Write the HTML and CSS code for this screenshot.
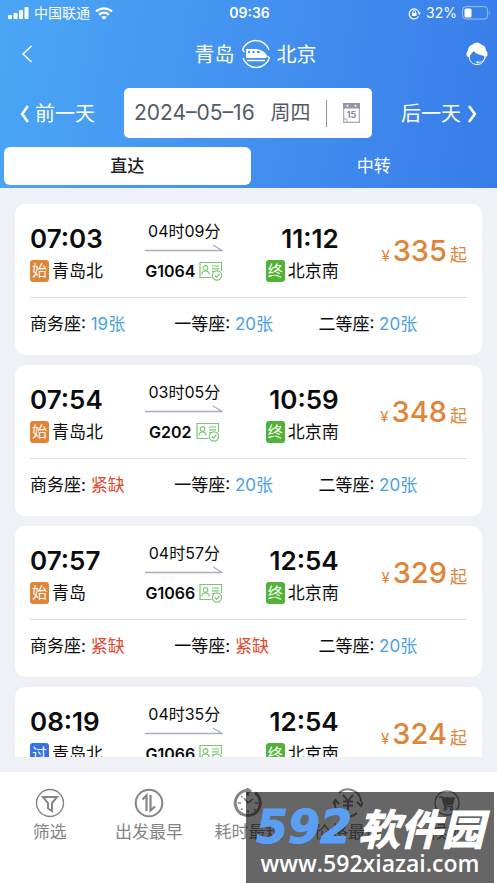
FILE: index.html
```html
<!DOCTYPE html>
<html lang="zh-CN">
<head>
<meta charset="utf-8">
<meta name="viewport" content="width=device-width, initial-scale=1">
<title>青岛 - 北京</title>
<link rel="stylesheet" href="styles.css">
</head>
<body>
<svg class="defs" aria-hidden="true">
  <symbol id="arrow" viewBox="0 0 78 8"><path d="M0 6.500H77L68 1" fill="none" stroke="#a9b0c3" stroke-width="1.300"/></symbol>
  <symbol id="idcard" viewBox="0 0 24 20" fill="none" stroke="#7cc576" stroke-width="1.200">
    <path d="M12.500 16.500H1V1.500H22.500V10"/><circle cx="6.500" cy="7" r="2.300"/><path d="M2.800 13.500C3 8.800 10 8.800 10.200 13.500M13 5H20M13 7.800H20M13 10.500H15"/>
    <circle cx="18" cy="14.500" r="4.600"/><path d="M15.800 14.500L17.500 16.200L20.500 12.800"/>
  </symbol>
</svg>

<header class="header">
  <div class="status">
    <div class="status-left">
      <svg width="21" height="12" viewBox="0 0 21 12" fill="#fff"><rect x="0" y="8" width="4" height="4" rx="1"/><rect x="5.500" y="6" width="4" height="6" rx="1"/><rect x="11" y="3" width="4" height="9" rx="1"/><rect x="16.500" y="0" width="4" height="12" rx="1"/></svg>
      <span>中国联通</span>
      <svg class="wifi" width="18" height="13" viewBox="0 0 18 13" fill="none" stroke="#fff" stroke-width="2.300"><path d="M1 4.500C5.500 0.200 12.500 0.200 17 4.500M4 7.800C7 5 11 5 14 7.800"/><path d="M6.200 10C7.800 8.500 10.200 8.500 11.800 10L9 12.800Z" fill="#fff" stroke="none"/></svg>
    </div>
    <strong class="clock">09:36</strong>
    <div class="status-right">
      <svg width="13" height="13" viewBox="0 0 13 13" fill="none" stroke="#fff" stroke-width="1.200"><path d="M10.500 9.500A5 5 0 1 1 11 5.500"/><path d="M9.500 5.500H13L11.500 8Z" fill="#fff" stroke="none"/><rect x="4" y="6" width="4.500" height="3" fill="#fff" stroke="none"/><path d="M4.900 6V4.800A1.300 1.300 0 0 1 7.600 4.800V6" stroke-width="1"/></svg>
      <span>32%</span>
      <svg width="29" height="14" viewBox="0 0 29 14"><rect x=".6" y=".6" width="25" height="12.500" rx="3.500" fill="none" stroke="#fff" stroke-opacity=".5"/><rect x="2.500" y="2.500" width="7" height="9" rx="1.500" fill="#fff"/><path d="M27.500 4.500Q29 7 27.500 9.500Z" fill="#fff" fill-opacity=".5"/></svg>
    </div>
  </div>

  <div class="title-row">
    <button class="icon-btn" aria-label="返回"><svg width="12" height="18" viewBox="0 0 12 18" fill="none" stroke="#fff" stroke-width="1.500"><path d="M10.500 1L2 9L10.500 17"/></svg></button>
    <h1 class="route"><span>青岛</span>
      <svg width="30" height="30" viewBox="0 0 30 30" fill="none" stroke="#fff" stroke-width="1.400">
        <path d="M1.500 11A14 14 0 0 1 28 11M28.500 19A14 14 0 0 1 2 19M1.500 11L3.500 13M28.500 19L26.500 17"/>
        <path d="M5 10H15C20 10 24.500 14 26 16.500C26 18.500 25 19 24 19H5Z" fill="#fff" stroke="none"/><path d="M6 21.500H24"/><path d="M7 12H9V14H7ZM11.500 12H13.500V14H11.500ZM16 12H18L19.500 14H16Z" fill="#4594f1" stroke="none"/>
      </svg>
      <span>北京</span></h1>
    <button class="icon-btn" aria-label="客服"><svg width="22" height="24" viewBox="0 0 22 24" fill="none" stroke="#fff"><path d="M3 14C3.500 19 6 22.500 11 22.500S18.500 19 19 14" stroke-width="1"/><path d="M2 15C0 14 0 10 2 8.500C2 5 5 2.500 7 2.500C8 .2 14 .2 15 2.500C18 3 20 5 20 8.500C22 10 22 14 20 15L18.500 14C13 13 9 11 7.500 9C6.500 11 4.500 12 3.500 15Z" fill="#fff" stroke="none"/><path d="M19 15C19 19 15 20.500 12 20.300"/><circle cx="11.500" cy="20.300" r=".8" fill="#fff"/></svg></button>
  </div>

  <div class="date-row">
    <button class="day-btn"><svg width="9" height="18" viewBox="0 0 9 18" fill="none" stroke="#fff" stroke-width="2.600"><path d="M7.800 1L2.200 9L7.800 17"/></svg>前一天</button>
    <button class="date-box"><span class="date">2024–05–16</span><span>周四</span><i class="divider"></i>
      <svg width="17" height="22" viewBox="0 0 17 22"><path d="M.7 2V20.300H16.300V2" fill="#fff" stroke="#a5a8b5" stroke-width="1.200"/><path d="M0 1H17V6.500H0Z" fill="#9396a5"/><circle cx="4.500" cy="3.800" r="1" fill="#fff"/><circle cx="12.500" cy="3.800" r="1" fill="#fff"/><path d="M1 17H4V20" fill="none" stroke="#a5a8b5"/><text x="8.500" y="16" class="cal-num">15</text></svg>
    </button>
    <button class="day-btn">后一天<svg width="10" height="18" viewBox="0 0 10 18" fill="none" stroke="#fff" stroke-width="2.600"><path d="M2 1L7.800 9L2 17"/></svg></button>
  </div>

  <nav class="tabs"><button class="tab active">直达</button><button class="tab">中转</button></nav>
</header>

<main class="results">
  <div class="list">
    <article class="card">
      <div class="trip">
        <div class="stop"><b class="time">07:03</b><span class="station"><i class="tag start">始</i>青岛北</span></div>
        <div class="train"><span>04时09分</span><svg class="arrow"><use href="#arrow"/></svg><span class="number"><b>G1064</b><svg class="idcard"><use href="#idcard"/></svg></span></div>
        <div class="stop end-stop"><b class="time">11:12</b><span class="station"><i class="tag end">终</i>北京南</span></div>
        <div class="price"><small>¥</small><b>335</b><span>起</span></div>
      </div>
      <div class="seats"><span>商务座: <em>19张</em></span><span>一等座: <em>20张</em></span><span>二等座: <em>20张</em></span></div>
    </article>
    <article class="card">
      <div class="trip">
        <div class="stop"><b class="time">07:54</b><span class="station"><i class="tag start">始</i>青岛北</span></div>
        <div class="train"><span>03时05分</span><svg class="arrow"><use href="#arrow"/></svg><span class="number"><b>G202</b><svg class="idcard"><use href="#idcard"/></svg></span></div>
        <div class="stop end-stop"><b class="time">10:59</b><span class="station"><i class="tag end">终</i>北京南</span></div>
        <div class="price"><small>¥</small><b>348</b><span>起</span></div>
      </div>
      <div class="seats"><span>商务座: <em class="scarce">紧缺</em></span><span>一等座: <em>20张</em></span><span>二等座: <em>20张</em></span></div>
    </article>
    <article class="card">
      <div class="trip">
        <div class="stop"><b class="time">07:57</b><span class="station"><i class="tag start">始</i>青岛</span></div>
        <div class="train"><span>04时57分</span><svg class="arrow"><use href="#arrow"/></svg><span class="number"><b>G1066</b><svg class="idcard"><use href="#idcard"/></svg></span></div>
        <div class="stop end-stop"><b class="time">12:54</b><span class="station"><i class="tag end">终</i>北京南</span></div>
        <div class="price"><small>¥</small><b>329</b><span>起</span></div>
      </div>
      <div class="seats"><span>商务座: <em class="scarce">紧缺</em></span><span>一等座: <em class="scarce">紧缺</em></span><span>二等座: <em>20张</em></span></div>
    </article>
    <article class="card">
      <div class="trip">
        <div class="stop"><b class="time">08:19</b><span class="station"><i class="tag pass">过</i>青岛北</span></div>
        <div class="train"><span>04时35分</span><svg class="arrow"><use href="#arrow"/></svg><span class="number"><b>G1066</b><svg class="idcard"><use href="#idcard"/></svg></span></div>
        <div class="stop end-stop"><b class="time">12:54</b><span class="station"><i class="tag end">终</i>北京南</span></div>
        <div class="price"><small>¥</small><b>324</b><span>起</span></div>
      </div>
    </article>
  </div>
</main>

<footer class="toolbar">
  <button><svg width="30" height="30" viewBox="0 0 30 30"><circle cx="15" cy="15" r="13.500"/><path d="M8 9H22L17 15V23L13 20.500V15Z" stroke-width="2"/></svg>筛选</button>
  <button><svg width="30" height="30" viewBox="0 0 30 30"><circle cx="15" cy="15" r="13.300" stroke-width="2"/><path d="M8.500 11.500L12.500 7.500V23M16.500 7V22.500L21 18.500" stroke-width="2.200"/></svg>出发最早</button>
  <button><svg width="30" height="30" viewBox="0 0 30 30"><path d="M15 2.500A12.500 12.500 0 1 0 22 4.800" stroke-width="3"/><path d="M14 0L18 3L14 6Z" fill="#858585"/><path d="M11 10L15 15L20 11M15 5V8M15 22V25M5 15H8M22 15H25M8 8L9.500 9.500M21 21L22.500 22.500M8 22L9.500 20.500" stroke-width="1.600"/></svg>耗时最短</button>
  <button><svg width="30" height="30" viewBox="0 0 30 30"><path d="M6 5A13 13 0 0 1 28 14M24 25A13 13 0 0 1 2 14M0 16L2.500 12L6 16M24 14L28 18L30 14" stroke-width="2"/><path d="M10 7L15 13L20 7M15 13V22M10 13.500H20M10 17.500H20" stroke-width="2"/></svg>价格最低</button>
  <button><svg width="30" height="30" viewBox="0 0 30 30"><circle cx="15" cy="15" r="12"/><path d="M7 9H10L13 18.500H21" stroke-width="1.600"/><path d="M11 10H22L20.500 16.500H13Z" fill="#858585"/><circle cx="13.500" cy="21" r="1.200"/><circle cx="19.500" cy="21" r="1.200"/></svg>候补</button>
  <div class="watermark"><div class="brand"><b>592</b><span>软件园</span></div><div class="site">www.592xiazai.com</div></div>
</footer>
</body>
</html>
```
FILE: styles.css
```css
* { box-sizing: border-box; }
body {
  margin: 0;
  height: 100vh;
  display: flex;
  flex-direction: column;
  overflow: hidden;
  background: #eff1f6;
  color: #0b0b0c;
  font: 16px/24px Inter, "Noto Sans CJK SC", sans-serif;
}
button { border: 0; padding: 0; background: none; color: inherit; font: inherit; }
svg { display: block; flex: none; }
i, em { font-style: normal; }
.defs { position: absolute; width: 0; height: 0; }

.header { flex: none; padding-bottom: 3px; color: #fff; background: linear-gradient(100deg, #4aa6f5, #4391f0 50%, #387de9); }
.status { display: grid; grid-template-columns: 1fr auto 1fr; align-items: center; height: 26px; padding: 0 6px 0 8px; font-size: 14px; }
.status-left, .status-right { display: flex; align-items: center; gap: 5px; }
.status-right { justify-content: flex-end; }
.clock { font-weight: 600; }

.title-row { display: grid; grid-template-columns: 1fr auto 1fr; align-items: center; height: 56px; padding: 0 9px 0 21px; }
.icon-btn:last-child { justify-self: end; }
.icon-btn:first-child { justify-self: start; }
.route { display: flex; align-items: center; gap: 6px; margin: 0 0 0 2px; font-size: 20px; font-weight: 400; }
.route span, .day-btn { padding-top: 2px; }

.date-row { display: flex; justify-content: space-between; align-items: center; padding: 6px 20px 9px; }
.day-btn { display: flex; align-items: center; gap: 6px; font-size: 20px; }
.date-box { display: flex; align-items: center; justify-content: space-between; height: 50px; width: 248px; padding: 0 12px 0 10px; border-radius: 5px; background: #fff; color: #555a66; font-size: 20px; white-space: nowrap; }
.date { font-size: 21px; }
.divider { width: 1px; height: 27px; background: #8e93a0; }
.cal-num { font: 700 9px Inter, sans-serif; fill: #888b99; text-anchor: middle; }

.tabs { display: grid; grid-template-columns: 1fr 1fr; padding-left: 4px; }
.tab { height: 38px; border-radius: 6px; font-size: 17px; }
.tab.active { background: #fff; color: #222; font-weight: 500; }

.results { flex: 1; min-height: 0; display: flex; padding: 16px 15px 15px; }
.list { flex: 1; display: flex; flex-direction: column; gap: 10px; overflow: hidden; }
.card { flex: none; padding: 0 15px; border-radius: 10px; background: #fff; }
.trip { display: flex; justify-content: space-between; height: 94px; padding-top: 15px; border-bottom: 1px solid #dcdde1; white-space: nowrap; }
.stop { display: flex; flex-direction: column; width: 73px; }
.end-stop { align-items: flex-end; }
.time { font-size: 26px; line-height: 40px; font-weight: 600; }
.station { display: flex; align-items: center; gap: 3px; font-size: 17px; }
.tag { width: 19px; height: 22px; border-radius: 3px; color: #fff; font-size: 15px; line-height: 22px; text-align: center; }
.start { background: #e08437; }
.end { background: #50b236; }
.pass { background: #3672e8; }
.train { display: flex; flex-direction: column; align-items: center; width: 78px; }
.arrow { width: 78px; height: 8px; margin-top: 1px; margin-bottom: 7px; }
.number { display: flex; align-items: center; gap: 4px; }
.number b { font-weight: 600; }
.idcard { width: 24px; height: 20px; }
.price { display: flex; align-items: baseline; justify-content: flex-end; gap: 3px; width: 86px; padding-top: 12px; color: #e08439; font-size: 17px; line-height: 40px; }
.price b { font-size: 29px; font-weight: 500; }
.price small { font-size: 15px; }
.seats { display: grid; grid-template-columns: 33% 33% 1fr; align-items: center; height: 57px; padding-bottom: 6px; font-size: 17px; white-space: nowrap; }
.seats em { color: #4d9fe3; }
.seats .scarce { color: #e0492f; }

.toolbar { position: relative; flex: none; display: grid; grid-template-columns: repeat(5, 1fr); align-items: start; height: 111px; padding-top: 16px; background: #fff; }
.toolbar button { display: flex; flex-direction: column; align-items: center; gap: 2px; color: #858585; font-size: 17px; }
.toolbar svg { fill: none; stroke: #858585; stroke-width: 1.4; }
.watermark { position: absolute; right: 3px; bottom: 0; width: 248px; height: 91px; padding-top: 11px; background: rgba(0, 0, 0, .6); color: #fff; text-align: center; }
.brand { display: flex; align-items: center; justify-content: center; gap: 6px; height: 48px; font: italic 700 42px/44px "Noto Sans CJK SC", sans-serif; -webkit-text-stroke: 1px currentColor; }
.brand b { color: #5b9ff5; font: italic 700 46px/48px "DejaVu Sans", sans-serif; }
.site { font: 600 23px/24px "Open Sans", sans-serif; }
```
